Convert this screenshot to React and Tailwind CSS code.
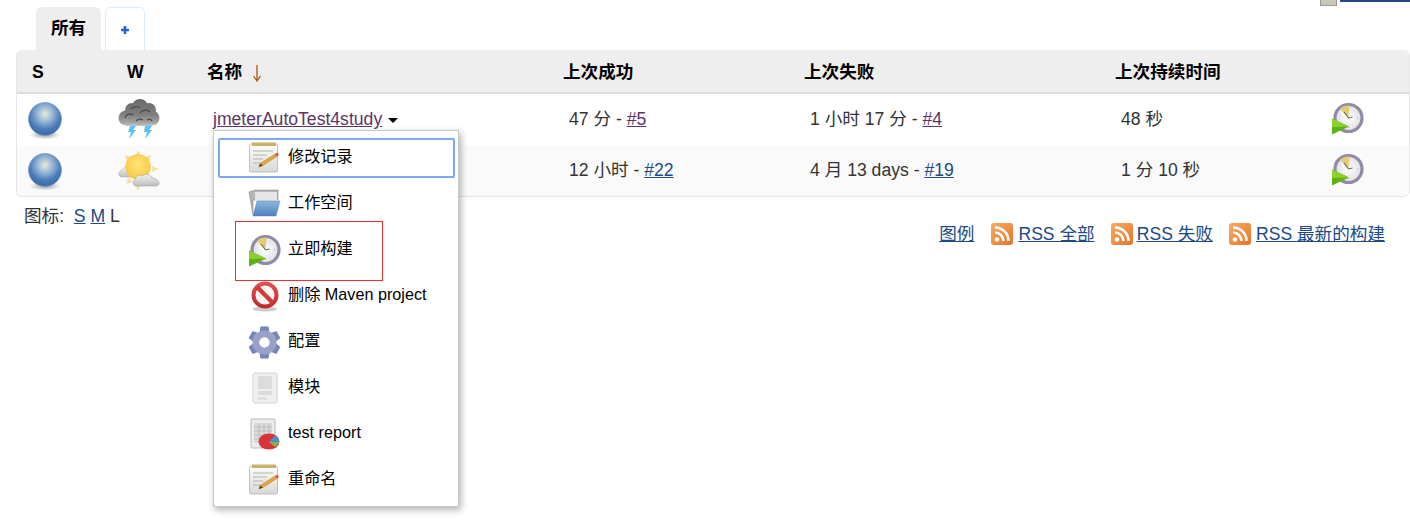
import { useId } from 'react';

const FUENTE = '[font-family:"Liberation_Sans","Noto_Sans_CJK_SC",sans-serif]';

function Bola() {
  const id = useId();
  return (
    <svg width="36" height="38" viewBox="0 0 36 38">
      <defs>
        <radialGradient id={id} cx="0.5" cy="0.35" r="0.62">
          <stop offset="0" stopColor="#e9ecd8" />
          <stop offset="0.35" stopColor="#9dbad6" />
          <stop offset="0.75" stopColor="#4a7cb8" />
          <stop offset="1" stopColor="#3f6ba8" />
        </radialGradient>
        <radialGradient id={`${id}s`} cx="0.5" cy="0.5" r="0.5">
          <stop offset="0" stopColor="#666" stopOpacity="0.7" />
          <stop offset="1" stopColor="#888" stopOpacity="0" />
        </radialGradient>
      </defs>
      <ellipse cx="18" cy="33" rx="16" ry="4.5" fill={`url(#${id}s)`} />
      <circle cx="18" cy="17" r="16.5" fill={`url(#${id})`} stroke="#7f9fcb" strokeWidth="0.8" />
    </svg>
  );
}

function Tormenta() {
  const id = useId();
  return (
    <svg width="42" height="42" viewBox="0 0 42 42">
      <defs>
        <linearGradient id={id} gradientUnits="userSpaceOnUse" x1="0" y1="0" x2="0" y2="28">
          <stop offset="0" stopColor="#6a6a6a" />
          <stop offset="0.55" stopColor="#7d7d7d" />
          <stop offset="0.85" stopColor="#a5a5a5" />
          <stop offset="1" stopColor="#d2d2d2" />
        </linearGradient>
      </defs>
      <g fill={`url(#${id})`}>
        <circle cx="8" cy="19" r="7.500" />
        <circle cx="14" cy="11" r="7" />
        <circle cx="22" cy="8" r="8" />
        <circle cx="31" cy="11" r="7" />
        <circle cx="34" cy="19" r="7.500" />
        <rect x="8" y="12" width="26" height="15" />
      </g>
      <path d="M7 19c1-4 5-5 8-3M13 10c3-3 7-3 9-1M22 14c2-3 7-4 10-1M18 22c2-2 5-2 7-1M29 21c2-1 4-1 5 1" fill="none" stroke="#4c4c4c" strokeWidth="1.300" />
      <path d="M12 27h6l-3 4h3l-7 9 2-7h-3z" fill="#55c3f5" />
      <path d="M27 27h7l-3 4h3l-7 9 2-7h-3z" fill="#55c3f5" />
    </svg>
  );
}

function SolNube() {
  const id = useId();
  const idNube = `${id}n`;
  return (
    <svg width="42" height="42" viewBox="0 0 42 42">
      <defs>
        <radialGradient id={id} cx="0.5" cy="0.4" r="0.6">
          <stop offset="0" stopColor="#ffe680" />
          <stop offset="1" stopColor="#f9c93c" />
        </radialGradient>
        <linearGradient id={idNube} x1="0" y1="0" x2="0" y2="1">
          <stop offset="0" stopColor="#f2f2f2" />
          <stop offset="1" stopColor="#bdbdbd" />
        </linearGradient>
      </defs>
      <g fill="#f9dfa6">
        <path d="M20 0l3 7h-6zM20 41l-3-7h6zM33 5l-2 7-5-5zM7 5l7 2-5 5zM41 19l-7 3v-6zM36 32l-7-2 5-5zM8 34l2-7 5 5z" />
      </g>
      <path d="M3 27c-3-1-3-6 1-7 1-3 6-3 8 0 3 0 4 3 3 7z" fill={`url(#${idNube})`} stroke="#b5b5b5" strokeWidth="0.6" />
      <circle cx="20" cy="17" r="12.500" fill={`url(#${id})`} stroke="#eec65f" strokeWidth="0.6" />
      <path d="M18 36c-3 0-4-5-1-6 0-4 5-6 8-4 2-3 8-2 9 2 4 0 8 3 7 6-1 2-2 2-3 2z" fill={`url(#${idNube})`} stroke="#a8a8a8" strokeWidth="0.6" />
    </svg>
  );
}

function Reloj() {
  const id = useId();
  return (
    <svg width="33" height="33" viewBox="0 0 33 33">
      <defs>
        <radialGradient id={id} cx="0.5" cy="0.5" r="0.55">
          <stop offset="0" stopColor="#ffffff" />
          <stop offset="1" stopColor="#dcdbe0" />
        </radialGradient>
      </defs>
      <circle cx="17.500" cy="16" r="13.500" fill={`url(#${id})`} stroke="#8f8ba6" strokeWidth="3.200" />
      <path d="M17.500 16 L9 6.500 A12.500 12.500 0 0 1 18.500 3.500z" fill="#e3cb6e" />
      <path d="M17.500 16 L9.500 9 L12.500 15z" fill="#fff" />
      <path d="M26 16h1M17.500 25v1" stroke="#aaa" strokeWidth="1" />
      <path d="M13 10l4.500 6 4-1" fill="none" stroke="#666" strokeWidth="1.100" />
      <path d="M1 16.500l17 8L1 32.500z" fill="#5cb214" />
      <path d="M1 16.500l17 8L1 25z" fill="#8bd02c" />
    </svg>
  );
}

function Libreta() {
  const id = useId();
  return (
    <svg width="33" height="33" viewBox="0 0 33 33">
      <defs>
        <linearGradient id={id} x1="0" y1="0" x2="0" y2="1">
          <stop offset="0" stopColor="#fdfdfb" />
          <stop offset="1" stopColor="#d8d8d5" />
        </linearGradient>
      </defs>
      <rect x="1.500" y="2" width="28" height="28" rx="1.500" fill={`url(#${id})`} stroke="#b4b4b0" strokeWidth="0.8" />
      <rect x="4" y="0.500" width="24" height="3.500" fill="#c9b26a" />
      <path d="M5 9h20M5 13h14M5 17h10M5 21h7" stroke="#b4b4b0" strokeWidth="1.200" />
      <path d="M11 25l1-3.500L27 12l2 2.500-14 9z" fill="#e1a63c" stroke="#a97420" strokeWidth="0.400" />
      <path d="M27 12l2.500-1.500 1.500 2.500-2 1.500z" fill="#d9534a" />
      <path d="M11 25l1-3.500 3 2z" fill="#5a4420" />
    </svg>
  );
}

function Carpeta() {
  const id = useId();
  return (
    <svg width="33" height="30" viewBox="0 0 33 30">
      <defs>
        <linearGradient id={id} x1="0" y1="0" x2="0" y2="1">
          <stop offset="0" stopColor="#8fb6e0" />
          <stop offset="1" stopColor="#4f81bd" />
        </linearGradient>
      </defs>
      <path d="M1 3l6-2 23 0v10H5v15z" fill="#b5b5b5" stroke="#8a8a8a" strokeWidth="0.6" />
      <path d="M7 3h22v9H7z" fill="#e6e6e6" />
      <path d="M5 27L9 12h23L28 27z" fill={`url(#${id})`} stroke="#5c86b5" strokeWidth="0.5" />
    </svg>
  );
}

function Prohibido() {
  const id = useId();
  return (
    <svg width="30" height="31" viewBox="0 0 30 31">
      <defs>
        <linearGradient id={id} x1="0" y1="0" x2="0" y2="1">
          <stop offset="0" stopColor="#e05050" />
          <stop offset="1" stopColor="#c42a2a" />
        </linearGradient>
      </defs>
      <ellipse cx="15" cy="28" rx="12" ry="2.500" fill="#999" opacity="0.5" />
      <circle cx="15" cy="14" r="11.500" fill="#f6f6f6" stroke={`url(#${id})`} strokeWidth="4" />
      <path d="M7 6L23 22" stroke="#d23a3a" strokeWidth="4.500" />
    </svg>
  );
}

function Engranaje() {
  const id = useId();
  const dientes = [0, 60, 120, 180, 240, 300];
  return (
    <svg width="33" height="33" viewBox="0 0 33 33">
      <defs>
        <linearGradient id={id} gradientUnits="userSpaceOnUse" x1="0" y1="0" x2="0" y2="33">
          <stop offset="0" stopColor="#6f82b4" />
          <stop offset="1" stopColor="#bcbcda" />
        </linearGradient>
      </defs>
      <g fill={`url(#${id})`}>
        {dientes.map((g) => (
          <path key={g} d="M12.500 0.500h8l1.500 9h-11z" transform={`rotate(${g} 16.500 16.500)`} />
        ))}
      </g>
      <circle cx="16.500" cy="16.500" r="8.500" fill="none" stroke="#9aa1c8" strokeWidth="7" />
      <circle cx="16.500" cy="16.500" r="5" fill="#fff" />
    </svg>
  );
}

function Modulo() {
  return (
    <svg width="26" height="32" viewBox="0 0 26 32">
      <rect x="1" y="1" width="24" height="30" rx="1.500" fill="#efefef" stroke="#d2d2d2" />
      <rect x="6" y="4" width="14" height="13" fill="#dcdcdc" />
      <rect x="6" y="19" width="14" height="4" fill="#dcdcdc" />
      <rect x="6" y="25" width="9" height="3" fill="#e2e2e2" />
    </svg>
  );
}

function Reporte() {
  return (
    <svg width="30" height="32" viewBox="0 0 30 32">
      <rect x="1" y="1" width="24" height="29" rx="1" fill="#ececec" stroke="#b9b9b9" />
      <path d="M4 5h18v20H4z" fill="#dadada" />
      <path d="M4 9h18M4 13h18M4 17h18M4 21h18M9 5v20M14 5v20M19 5v20" stroke="#b5b5b5" strokeWidth="0.7" />
      <ellipse cx="19" cy="23.500" rx="10.500" ry="8" fill="#d8343a" />
      <path d="M19 24l6-6.500a10 7 0 0 1 4 6.500z" fill="#4a8fcf" />
      <path d="M19 24h10a10 7 0 0 1-4 5z" fill="#84b63c" />
    </svg>
  );
}

function Rss() {
  return (
    <svg width="22" height="22" viewBox="0 0 22 22" className="shrink-0">
      <defs>
        <linearGradient id="rss-naranja" x1="0" y1="0" x2="1" y2="1">
          <stop offset="0" stopColor="#f7ab63" />
          <stop offset="1" stopColor="#e8742a" />
        </linearGradient>
      </defs>
      <rect x="0" y="0" width="22" height="22" rx="3" fill="url(#rss-naranja)" />
      <circle cx="6" cy="16.500" r="2.300" fill="#fff" />
      <path d="M4 9.500a8.500 8.500 0 0 1 8.500 8.500M4 4.500a13.500 13.500 0 0 1 13.500 13.500" fill="none" stroke="#fff" strokeWidth="2.600" />
    </svg>
  );
}

const menu = [
  { texto: '修改记录', icono: <Libreta />, activo: true },
  { texto: '工作空间', icono: <Carpeta /> },
  { texto: '立即构建', icono: <Reloj /> },
  { texto: '删除 Maven project', icono: <Prohibido /> },
  { texto: '配置', icono: <Engranaje /> },
  { texto: '模块', icono: <Modulo /> },
  { texto: 'test report', icono: <Reporte /> },
  { texto: '重命名', icono: <Libreta /> },
];

const COLUMNAS = 'grid grid-cols-[100px_90px_356px_241px_311px_216px_1fr] items-center';

function Fila({ clima, nombre, exito, fallo, duracion, fondo, colorLink }) {
  return (
    <div className={`${COLUMNAS} h-[51px] text-[17.6px] text-[#333] ${fondo}`}>
      <div className="pl-[10px] pt-[2px] flex"><Bola /></div>
      <div className="pl-[1px] flex">{clima}</div>
      <div className="pl-[6px]">{nombre}</div>
      <div className="pl-[6px]">{exito[0]} - <a className={`underline ${colorLink}`}>{exito[1]}</a></div>
      <div className="pl-[6px]">{fallo[0]} - <a className={`underline ${colorLink}`}>{fallo[1]}</a></div>
      <div className="pl-[6px]">{duracion}</div>
      <div className="flex -mt-[2px]"><Reloj /></div>
    </div>
  );
}

export default function App() {
  return (
    <div className={`relative w-[1410px] h-[525px] overflow-hidden bg-white ${FUENTE}`}>
      <div className="flex h-[50px] items-start pl-[36px] pt-[7px]">
        <div className="h-[43px] w-[65px] bg-[#eee] rounded-t-[6px] flex items-center justify-center font-bold text-[17.6px] text-black">所有</div>
        <div className="ml-[4px] h-[43px] w-[40px] bg-white border border-b-0 border-[#d9ecfb] rounded-t-[6px] flex items-center justify-center">
          <svg width="10" height="10" viewBox="0 0 10 10" className="mt-[1px]">
            <path d="M5 1v8M1 5h8" stroke="#2563d8" strokeWidth="2.600" />
          </svg>
        </div>
        <div className="ml-auto -mt-[7px] flex items-start">
          <div className="w-[17px] h-[6px] bg-[#c9c5b8] border border-[#999] border-t-0" />
          <div className="ml-[3px] w-[70px] h-[2px] bg-[#204a87]" />
        </div>
      </div>

      <div className="ml-[16px] w-[1394px] border border-t-0 border-[#e6e6e6] rounded-[6px] overflow-hidden">
        <div className={`${COLUMNAS} h-[44px] pt-[3px] bg-[#eee] border-b-[2px] border-[#ddd] font-bold text-[17.6px] text-black`}>
          <div className="pl-[15px]">S</div>
          <div className="pl-[10px]">W</div>
          <div className="flex items-center">
            名称
            <svg width="10" height="18" viewBox="0 0 10 18" className="ml-[10px] mt-[2px]">
              <path d="M5 1v15M1.500 12L5 17l3.500-5" fill="none" stroke="#a85a0c" strokeWidth="1.300" />
            </svg>
          </div>
          <div>上次成功</div>
          <div>上次失败</div>
          <div>上次持续时间</div>
          <div />
        </div>
        <Fila
          clima={<Tormenta />}
          nombre={
            <span className="inline-flex items-center">
              <a className="underline text-[#5c3566]">jmeterAutoTest4study</a>
              <span className="ml-[6px] mt-[2px] w-0 h-0 border-x-[5px] border-x-transparent border-t-[5px] border-t-black" />
            </span>
          }
          exito={['47 分', '#5']}
          fallo={['1 小时 17 分', '#4']}
          duracion="48 秒"
          fondo="bg-white"
          colorLink="text-[#5c3566]"
        />
        <Fila
          clima={<SolNube />}
          nombre={null}
          exito={['12 小时', '#22']}
          fallo={['4 月 13 days', '#19']}
          duracion="1 分 10 秒"
          fondo="bg-[#fafafa]"
          colorLink="text-[#204a87]"
        />
      </div>

      <div className="flex justify-between mt-[6px] pl-[24px] pr-[25px] text-[#333]">
        <div className="text-[17.6px]">图标:&nbsp; <a className="underline text-[#204a87]">S</a> <a className="underline text-[#204a87]">M</a> <span>L</span></div>
        <div className="flex items-center mt-[18px] text-[17.6px] text-[#204a87]">
          <a className="underline mr-[17px]">图例</a>
          <Rss />
          <a className="underline ml-[5px] mr-[16px]">RSS 全部</a>
          <Rss />
          <a className="underline ml-[4px] mr-[16px]">RSS 失败</a>
          <Rss />
          <a className="underline ml-[5px]">RSS 最新的构建</a>
        </div>
      </div>

      <div className="absolute left-[213px] top-[130px] w-[246px] h-[377px] bg-white border border-[#c8c8c8] shadow-[2px_3px_7px_rgba(0,0,0,0.3)] pt-[7px] pl-[4px] pr-[3px] flex flex-col">
        {menu.map((m) => (
          <div
            key={m.texto}
            className={`h-[40px] mb-[6px] flex items-center text-[16.2px] text-black rounded-[2px] ${m.activo ? 'border-2 border-[#7fa9ed]' : 'border-2 border-transparent'}`}
          >
            <div className="w-[33px] ml-[28px] flex justify-center shrink-0">{m.icono}</div>
            <span className="ml-[7px] -mt-[4px]">{m.texto}</span>
          </div>
        ))}
      </div>

      <div className="absolute left-[235px] top-[221px] w-[148px] h-[60px] border border-[#f03030]" />
    </div>
  );
}
